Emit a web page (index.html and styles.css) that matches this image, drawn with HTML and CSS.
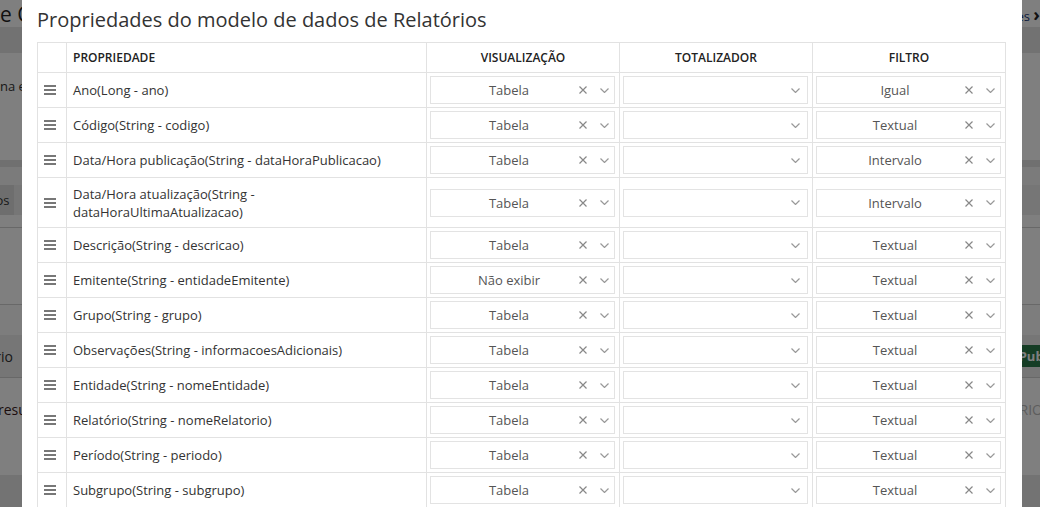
FILE: index.html
```html
<!DOCTYPE html>
<html lang="pt-BR">
<head>
  <meta charset="UTF-8">
  <title>Propriedades do modelo de dados de Relatórios</title>
  <link rel="stylesheet" href="styles.css">
</head>
<body>

  <!-- página por trás do modal -->
  <div class="page">
    <div class="page-top">
      <span class="page-title">e CONSULTA DE RELATÓRIOS</span>
      <span class="page-link">Mais opções <b>&#8250;</b></span>
    </div>
    <div class="page-bar"></div>
    <div class="page-intro">na exibição dos relatórios publicados</div>
    <div class="page-gap"></div>
    <div class="page-tabs">
      <span class="page-tab">Campos</span>
    </div>
    <div class="page-row-line"></div>
    <div class="page-row-mid"></div>
    <div class="page-row-head">
      <span class="page-head-label">Relatório</span>
      <span class="page-btn">Publicar</span>
    </div>
    <div class="page-row-body">
      <span class="page-red">resultado</span>
      <span class="page-muted">CRITERIO</span>
    </div>
    <div class="page-foot"></div>
  </div>

  <div class="overlay"></div>

  <div class="modal">
    <h1 class="modal-title">Propriedades do modelo de dados de Relatórios</h1>

    <table class="props">
      <colgroup>
        <col class="c-handle">
        <col class="c-prop">
        <col class="c-sel">
        <col class="c-sel">
        <col class="c-sel">
      </colgroup>
      <thead>
        <tr>
          <th></th>
          <th class="left">PROPRIEDADE</th>
          <th>VISUALIZAÇÃO</th>
          <th>TOTALIZADOR</th>
          <th>FILTRO</th>
        </tr>
      </thead>
      <tbody id="rows"></tbody>
    </table>
  </div>

<script>
  const rows = [
    ["Ano(Long - ano)", "Tabela", "Igual"],
    ["Código(String - codigo)", "Tabela", "Textual"],
    ["Data/Hora publicação(String - dataHoraPublicacao)", "Tabela", "Intervalo"],
    ["Data/Hora atualização(String - dataHoraUltimaAtualizacao)", "Tabela", "Intervalo"],
    ["Descrição(String - descricao)", "Tabela", "Textual"],
    ["Emitente(String - entidadeEmitente)", "Não exibir", "Textual"],
    ["Grupo(String - grupo)", "Tabela", "Textual"],
    ["Observações(String - informacoesAdicionais)", "Tabela", "Textual"],
    ["Entidade(String - nomeEntidade)", "Tabela", "Textual"],
    ["Relatório(String - nomeRelatorio)", "Tabela", "Textual"],
    ["Período(String - periodo)", "Tabela", "Textual"],
    ["Subgrupo(String - subgrupo)", "Tabela", "Textual"]
  ];

  const handleSvg = '<svg width="12" height="10" viewBox="0 0 12 10"><rect y="0" width="12" height="2"/><rect y="4" width="12" height="2"/><rect y="8" width="12" height="2"/></svg>';
  const clearSvg = '<svg width="8" height="8" viewBox="0 0 8 8"><path d="M0.5 0.5L7.5 7.5M7.5 0.5L0.5 7.5"/></svg>';
  const arrowSvg = '<svg width="9" height="5" viewBox="0 0 9 5"><path d="M0.5 0.5L4.5 4.5L8.5 0.5"/></svg>';

  function select(value) {
    if (!value) {
      return '<div class="select empty"><span class="select-value"></span><span class="select-arrow">' + arrowSvg + '</span></div>';
    }
    return '<div class="select"><span class="select-value">' + value + '</span>' +
      '<span class="select-clear">' + clearSvg + '</span>' +
      '<span class="select-arrow">' + arrowSvg + '</span></div>';
  }

  const tbody = document.getElementById("rows");
  rows.forEach(r => {
    const tr = document.createElement("tr");
    tr.innerHTML =
      '<td class="handle">' + handleSvg + '</td>' +
      '<td class="prop">' + r[0] + '</td>' +
      '<td class="sel">' + select(r[1]) + '</td>' +
      '<td class="sel">' + select("") + '</td>' +
      '<td class="sel">' + select(r[2]) + '</td>';
    tbody.appendChild(tr);
  });
</script>

</body>
</html>
```

FILE: styles.css
```css
body {
  margin: 0;
  font-family: "Open Sans", "Noto Sans", sans-serif;
  color: #333;
  overflow: hidden;
}

/* página de fundo */
.page {
  width: 1040px;
  height: 507px;
  background: #fff;
}
.page-top {
  height: 27px;
  display: flex;
  justify-content: space-between;
  align-items: center;
}
.page-title {
  font-size: 21px;
  color: #222;
  white-space: nowrap;
}
.page-link {
  font-size: 13px;
  color: #1a3a7a;
  white-space: nowrap;
}
.page-link b {
  font-size: 18px;
  color: #222;
}
.page-bar {
  height: 26px;
  background: #e4e4e4;
}
.page-intro {
  font-size: 13px;
  padding-top: 24px;
  height: 107px;
  box-sizing: border-box;
  white-space: nowrap;
}
.page-gap {
  height: 25px;
  background: linear-gradient(#e0e0e0 0 7px, #f6f6f6 7px);
}
.page-tabs {
  height: 30px;
  display: flex;
  background: #ececec;
}
.page-tab {
  margin-left: -40px;
  padding: 0 5px 0 0;
  background: #dcdcdc;
  font-size: 13px;
  line-height: 30px;
}
.page-row-line {
  height: 12px;
  border-bottom: 1px solid #d0d0d0;
}
.page-row-mid {
  height: 76px;
  border-bottom: 1px solid #d0d0d0;
}
.page-row-head {
  height: 73px;
  box-sizing: border-box;
  padding-top: 30px;
  border-bottom: 1px solid #d0d0d0;
  background: linear-gradient(#fafafa 0 30px, #ededed 30px);
  display: flex;
  justify-content: space-between;
  align-items: center;
  font-size: 14px;
}
.page-head-label {
  margin-left: -46px;
}
.page-btn {
  background: #2b7a4b;
  color: #fff;
  font-weight: bold;
  font-size: 13px;
  padding: 2px 8px;
  margin-right: -40px;
}
.page-row-body {
  height: 97px;
  display: flex;
  justify-content: space-between;
  align-items: flex-start;
  padding-top: 22px;
  box-sizing: border-box;
  font-size: 14px;
}
.page-red {
  color: #3a1a1a;
  margin-left: -2px;
}
.page-muted {
  color: #bbb;
  margin-right: -3px;
}
.page-foot {
  height: 32px;
  background: #e6e6e6;
}

.overlay {
  position: fixed;
  inset: 0;
  background: rgba(0, 0, 0, 0.5);
}

/* modal */
.modal {
  position: fixed;
  top: 0;
  left: 22px;
  width: 1000px;
  height: 507px;
  box-sizing: border-box;
  padding: 9px 15px 0 15px;
  background: #fff;
  overflow: hidden;
}
.modal-title {
  font-size: 20px;
  font-weight: normal;
  line-height: 22px;
  margin: 0 0 11px;
  color: #333;
}

.props {
  width: 969px;
  border-collapse: collapse;
  table-layout: fixed;
  font-size: 13px;
}
.c-handle { width: 29px; }
.c-prop { width: 360px; }
.c-sel { width: 193px; }

.props th,
.props td {
  border: 1px solid #e2e2e2;
}
.props th {
  font-size: 12px;
  font-weight: 600;
  color: #222;
  text-align: center;
  padding: 6px 6px;
  line-height: 17px;
}
.props th.left {
  text-align: left;
}
.handle {
  padding: 0;
}
.handle svg {
  display: block;
  margin-left: 6px;
  fill: #777;
}
.prop {
  padding: 8px 6px 6px;
  line-height: 17.5px;
  color: #333;
}
.sel {
  padding: 3px 4px 3px 3px;
}

.select {
  display: flex;
  align-items: center;
  height: 28px;
  box-sizing: border-box;
  border: 1px solid #e3e3e3;
  padding-right: 5px;
}
.select.empty {
  padding-right: 7px;
}
.select-value {
  flex: 1;
  text-align: center;
  padding-left: 14px;
  color: #555;
  white-space: nowrap;
}
.select-clear {
  margin: 0 13px 0 6px;
}
.select svg {
  display: block;
  fill: none;
  stroke: #888;
  stroke-width: 1.2;
}
.select-arrow svg {
  stroke: #999;
}
```
